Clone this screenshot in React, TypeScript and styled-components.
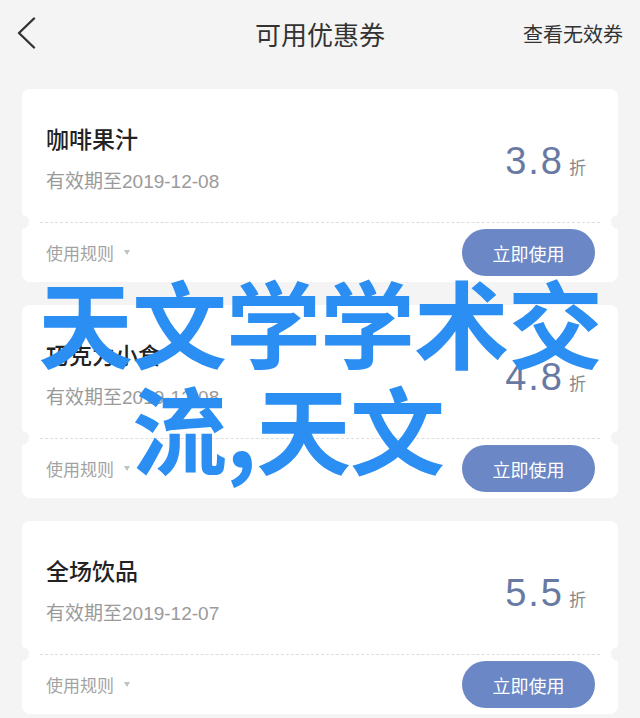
import React from "react";
import styled, { createGlobalStyle } from "styled-components";

type Coupon = {
    name: string;
    expires: string;
    discount: string;
};

const coupons: Coupon[] = [
    { name: "咖啡果汁", expires: "2019-12-08", discount: "3.8" },
    { name: "巧克力小食", expires: "2019-12-08", discount: "4.8" },
    { name: "全场饮品", expires: "2019-12-07", discount: "5.5" },
];

export default function App() {
    return (
        <>
            <GlobalStyle />
            <Page>
                <Header>
                    <BackButton aria-label="返回">
                        <svg width="20" height="32" viewBox="0 0 20 32" fill="none">
                            <polyline points="17,1.5 2,16 17,30.5" stroke="#333" strokeWidth="2.4" strokeLinecap="round" strokeLinejoin="round" />
                        </svg>
                    </BackButton>
                    <Title>可用优惠券</Title>
                    <HeaderLink>查看无效券</HeaderLink>
                </Header>

                <List>
                    {coupons.map((c) => (
                        <Card key={c.name}>
                            <CardTop>
                                <Info>
                                    <Name>{c.name}</Name>
                                    <Expires>有效期至{c.expires}</Expires>
                                </Info>
                                <Discount>
                                    <Amount>{c.discount}</Amount>
                                    <Unit>折</Unit>
                                </Discount>
                            </CardTop>
                            <Divider />
                            <CardBottom>
                                <Rules>
                                    使用规则
                                    <Caret />
                                </Rules>
                                <UseButton>立即使用</UseButton>
                            </CardBottom>
                        </Card>
                    ))}
                </List>

                <Watermark>
                    <WatermarkLine>天文学学术交</WatermarkLine>
                    <WatermarkLine indent={94}>流,天文</WatermarkLine>
                </Watermark>
            </Page>
        </>
    );
}

const GlobalStyle = createGlobalStyle`
    html, body {
        margin: 0;
        padding: 0;
        background-color: #f4f4f4;
    }
    body {
        font-family: "Liberation Sans", "Noto Sans CJK SC", sans-serif;
    }
`;

const Page = styled.div`
    position: relative;
    width: 640px;
    height: 718px;
    overflow: hidden;
    background-color: #f4f4f4;
`;

const Header = styled.div`
    display: grid;
    grid-template-columns: 1fr auto 1fr;
    align-items: center;
    height: 66px;
    padding: 0 17px 0 17px;
`;

const BackButton = styled.div`
    display: flex;
    align-items: center;
    justify-self: start;
    height: 32px;
`;

const Title = styled.div`
    font-size: 26px;
    color: #333;
`;

const HeaderLink = styled.div`
    justify-self: end;
    font-size: 20px;
    color: #333;
`;

const List = styled.div`
    display: flex;
    flex-direction: column;
    gap: 23px;
    padding: 23px 22px;
`;

const Card = styled.div`
    display: flex;
    flex-direction: column;
    height: 193px;
    background-color: #fff;
    border-radius: 8px;
    overflow: hidden;
`;

const CardTop = styled.div`
    display: flex;
    justify-content: space-between;
    align-items: flex-start;
    height: 133px;
    box-sizing: border-box;
    padding: 36px 32px 0 24px;
`;

const Info = styled.div`
    display: flex;
    flex-direction: column;
    gap: 14px;
`;

const Name = styled.div`
    font-size: 23px;
    line-height: 30px;
    color: #222;
    font-weight: 500;
`;

const Expires = styled.div`
    font-size: 19px;
    line-height: 26px;
    color: #9a9a9a;
`;

const Discount = styled.div`
    display: flex;
    align-items: baseline;
    margin-top: 14px;
`;

const Amount = styled.span`
    font-family: "Liberation Sans", sans-serif;
    font-size: 38px;
    line-height: 44px;
    letter-spacing: 2px;
    color: #687aa2;
`;

const Unit = styled.span`
    margin-left: 5px;
    font-size: 17px;
    color: #888;
`;

const Divider = styled.div`
    position: relative;
    margin: 0 18px;
    border-top: 1px dashed #dedede;

    &::before,
    &::after {
        content: "";
        position: absolute;
        top: -8px;
        width: 14px;
        height: 14px;
        border-radius: 50%;
        background-color: #f4f4f4;
    }
    &::before {
        left: -25px;
    }
    &::after {
        right: -25px;
    }
`;

const CardBottom = styled.div`
    display: flex;
    justify-content: space-between;
    align-items: center;
    flex: 1;
    padding: 0 23px 0 24px;
`;

const Rules = styled.div`
    display: flex;
    align-items: center;
    font-size: 17px;
    color: #a3a3a3;
`;

const Caret = styled.span`
    margin-left: 10px;
    width: 0;
    height: 0;
    border-left: 3px solid transparent;
    border-right: 3px solid transparent;
    border-top: 5px solid #c0c0c0;
`;

const UseButton = styled.button`
    width: 133px;
    height: 47px;
    border: none;
    border-radius: 24px;
    background-color: #6b87c5;
    color: #fff;
    font-family: "Liberation Sans", "Noto Sans CJK SC", sans-serif;
    font-size: 18px;
    cursor: pointer;
`;

const Watermark = styled.div`
    position: absolute;
    top: 268px;
    left: 38px;
    pointer-events: none;
`;

const WatermarkLine = styled.div<{ indent?: number }>`
    margin-left: ${(p) => p.indent ?? 0}px;
    font-family: "Noto Sans CJK SC", sans-serif;
    font-size: 95px;
    font-weight: 700;
    line-height: 106px;
    letter-spacing: -1px;
    color: #2b8ef2;
    white-space: nowrap;
`;
